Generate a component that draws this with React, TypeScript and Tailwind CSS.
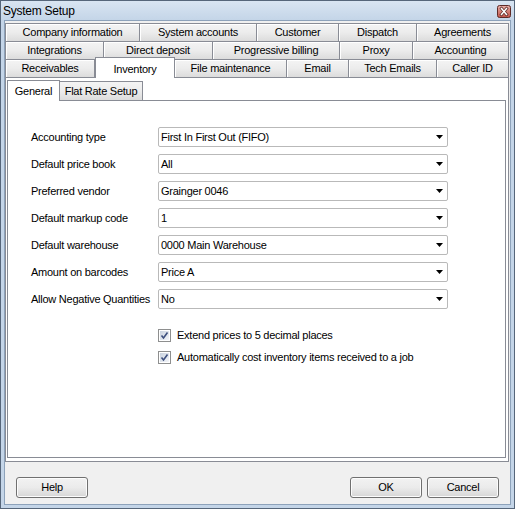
import React from 'react';

type Tab = { label: string; w: number; active?: boolean };

const tabRows: Tab[][] = [
  [
    { label: 'Company information', w: 135 },
    { label: 'System accounts', w: 117 },
    { label: 'Customer', w: 82 },
    { label: 'Dispatch', w: 78 },
    { label: 'Agreements', w: 92 },
  ],
  [
    { label: 'Integrations', w: 99 },
    { label: 'Direct deposit', w: 109 },
    { label: 'Progressive billing', w: 127 },
    { label: 'Proxy', w: 73 },
    { label: 'Accounting', w: 96 },
  ],
  [
    { label: 'Receivables', w: 90 },
    { label: 'Inventory', w: 80, active: true },
    { label: 'File maintenance', w: 112 },
    { label: 'Email', w: 62 },
    { label: 'Tech Emails', w: 88 },
    { label: 'Caller ID', w: 72 },
  ],
];

const fields = [
  { label: 'Accounting type', value: 'First In First Out (FIFO)' },
  { label: 'Default price book', value: 'All' },
  { label: 'Preferred vendor', value: 'Grainger 0046' },
  { label: 'Default markup code', value: '1' },
  { label: 'Default warehouse', value: '0000 Main Warehouse' },
  { label: 'Amount on barcodes', value: 'Price A' },
  { label: 'Allow Negative Quantities', value: 'No' },
];

const CloseButton = () => (
  <svg width="14" height="13" viewBox="0 0 14 13">
    <defs>
      <linearGradient id="cb" x1="0" y1="0" x2="0" y2="1">
        <stop offset="0" stopColor="#e8b0aa" />
        <stop offset="0.5" stopColor="#d47f76" />
        <stop offset="1" stopColor="#c2554b" />
      </linearGradient>
    </defs>
    <rect x="0.5" y="0.5" width="13" height="12" rx="2" fill="url(#cb)" stroke="#5e2b27" />
    <path d="M4.5 3.5 L9.5 9.5 M9.5 3.5 L4.5 9.5" stroke="#5e2b27" strokeWidth="3" strokeLinecap="square" />
    <path d="M4.5 3.5 L9.5 9.5 M9.5 3.5 L4.5 9.5" stroke="#ffffff" strokeWidth="1.5" strokeLinecap="square" />
  </svg>
);

const CheckBox = () => (
  <svg width="13" height="13" viewBox="0 0 13 13" className="shrink-0">
    <defs>
      <linearGradient id="ck" x1="0" y1="0" x2="1" y2="1">
        <stop offset="0" stopColor="#c9d2df" />
        <stop offset="1" stopColor="#f3f5f9" />
      </linearGradient>
    </defs>
    <rect x="0.5" y="0.5" width="12" height="12" fill="#ffffff" stroke="#8e8f8f" />
    <rect x="2" y="2" width="9" height="9" fill="url(#ck)" />
    <path d="M3.5 6.5 L5.5 9 L9.5 3.5" fill="none" stroke="#3d4f7e" strokeWidth="1.6" />
  </svg>
);

const Arrow = () => (
  <svg width="7" height="4" viewBox="0 0 7 4">
    <polygon points="0,0 7,0 3.5,4" fill="#000000" />
  </svg>
);

const Dropdown = ({ value }: { value: string }) => (
  <div className="w-[290px] h-[20px] flex items-center justify-between border border-[#b9b9b9] rounded-[2px] bg-white pl-[2px] pr-[4px]">
    <span>{value}</span>
    <Arrow />
  </div>
);

const Button = ({ label }: { label: string }) => (
  <div className="w-[72px] h-[21px] flex items-center justify-center border border-[#707070] rounded-[3px] bg-linear-to-b from-[#f2f2f2] via-[#ebebeb] to-[#d6d6d6] shadow-[inset_0_0_0_1px_#fcfcfc]">
    {label}
  </div>
);

export default function App() {
  return (
    <div className="w-[515px] h-[509px] flex flex-col border border-[#56667a] bg-[#c4d5e8] text-[11px] tracking-[-0.25px] text-black font-['Liberation_Sans',Arial,sans-serif]">
      <div className="h-[19px] flex items-center justify-between pl-[2px] pr-[3px] pt-px bg-linear-to-b from-[#d9e5f2] to-[#c4d5e8]">
        <span className="text-[12px]">System Setup</span>
        <CloseButton />
      </div>
      <div className="flex-1 mx-[3px] mb-[3px] flex flex-col border border-[#8da2ba] bg-[#f0f0f0] pt-[2px]">
        <div className="w-[504px] flex flex-col">
          {tabRows.map((row, i) => (
            <div key={i} className="h-[18px] flex">
              {row.map((t, j) =>
                t.active ? (
                  <div
                    key={t.label}
                    style={{ width: t.w }}
                    className="relative z-10 h-[21px] -mt-[2px] flex items-start justify-center pt-[3px] bg-white border-t border-r border-l border-[#898c95]"
                  >
                    {t.label}
                  </div>
                ) : (
                  <div
                    key={t.label}
                    style={{ width: t.w }}
                    className={`h-[18px] flex items-center justify-center border-t border-r border-[#898c95] bg-linear-to-b from-[#f4f4f4] via-[#ececec] to-[#dcdcdc] shadow-[inset_1px_1px_0_#ffffff] ${
                      j === 0 ? 'border-l' : ''
                    }`}
                  >
                    {t.label}
                  </div>
                )
              )}
            </div>
          ))}
        </div>
        <div className="w-[504px] h-[385px] border border-[#898c95] bg-white pt-[1px] pl-px">
          <div className="h-[21px] flex items-end">
            <div className="relative z-10 w-[53px] h-[21px] -mb-px flex items-start justify-center pt-[2px] bg-white border-t border-l border-r border-[#898c95]">
              General
            </div>
            <div className="w-[83px] h-[19px] flex items-center justify-center border-t border-r border-[#898c95] bg-linear-to-b from-[#f4f4f4] via-[#ececec] to-[#dcdcdc]">
              Flat Rate Setup
            </div>
          </div>
          <div className="w-[499px] h-[358px] border border-[#898c95] bg-white pt-[26px] pl-[23px]">
            <div className="flex flex-col gap-[7px]">
              {fields.map((f) => (
                <div key={f.label} className="h-[20px] flex items-center">
                  <span className="w-[127px]">{f.label}</span>
                  <Dropdown value={f.value} />
                </div>
              ))}
            </div>
            <div className="mt-[18px] ml-[127px] flex flex-col gap-[6px]">
              <div className="h-[16px] flex items-center gap-[6px]">
                <CheckBox />
                <span>Extend prices to 5 decimal places</span>
              </div>
              <div className="h-[16px] flex items-center gap-[6px]">
                <CheckBox />
                <span>Automatically cost inventory items received to a job</span>
              </div>
            </div>
          </div>
        </div>
        <div className="mt-[15px] px-[11px] flex justify-between">
          <Button label="Help" />
          <div className="flex gap-[5px]">
            <Button label="OK" />
            <Button label="Cancel" />
          </div>
        </div>
      </div>
    </div>
  );
}
